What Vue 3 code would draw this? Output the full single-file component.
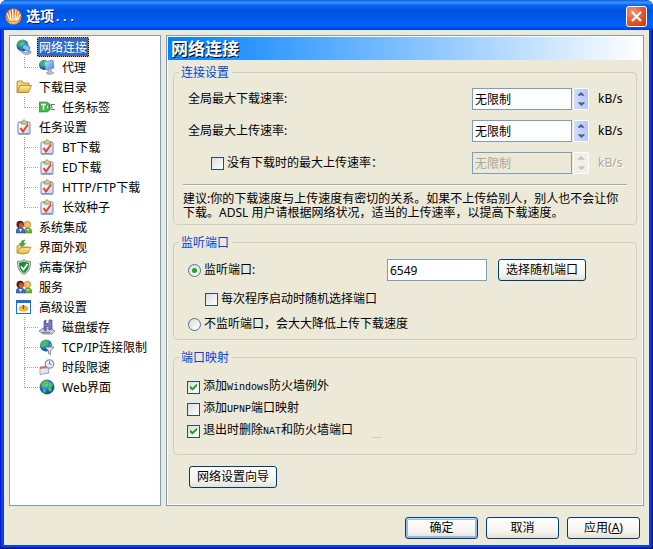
<script setup>
import { ref } from 'vue'

const tree = [
  { label: '网络连接', icon: 'network', selected: true, children: [{ label: '代理', icon: 'proxy' }] },
  { label: '下载目录', icon: 'folder', children: [{ label: '任务标签', icon: 'tag' }] },
  {
    label: '任务设置',
    icon: 'task',
    children: [
      { label: 'BT下载', icon: 'task' },
      { label: 'ED下载', icon: 'task' },
      { label: 'HTTP/FTP下载', icon: 'task' },
      { label: '长效种子', icon: 'task' },
    ],
  },
  { label: '系统集成', icon: 'users' },
  { label: '界面外观', icon: 'skin' },
  { label: '病毒保护', icon: 'shield' },
  { label: '服务', icon: 'users' },
  {
    label: '高级设置',
    icon: 'advanced',
    children: [
      { label: '磁盘缓存', icon: 'disk' },
      { label: 'TCP/IP连接限制', icon: 'filter' },
      { label: '时段限速', icon: 'schedule' },
      { label: 'Web界面', icon: 'globe' },
    ],
  },
]

const downRate = ref('无限制')
const upRate = ref('无限制')
const idleUpRate = ref('无限制')
const idleLimit = ref(false)
const listen = ref('on')
const port = ref('6549')
const randomPort = ref(false)
const firewall = ref(true)
const upnp = ref(false)
const cleanup = ref(true)
</script>

<template>
  <div class="window">
    <svg class="defs" aria-hidden="true">
      <defs>
        <radialGradient id="sea" cx="40%" cy="30%" r="75%">
          <stop offset="0" stop-color="#7fd0ff" />
          <stop offset=".5" stop-color="#1f7fd0" />
          <stop offset="1" stop-color="#0a3c8c" />
        </radialGradient>
        <linearGradient id="gold" x1="0" y1="0" x2="0" y2="1">
          <stop offset="0" stop-color="#fff0a8" />
          <stop offset="1" stop-color="#e8b040" />
        </linearGradient>
        <linearGradient id="screen" x1="0" y1="0" x2="1" y2="1">
          <stop offset="0" stop-color="#c4ecff" />
          <stop offset="1" stop-color="#3a86dc" />
        </linearGradient>
        <linearGradient id="paper" x1="0" y1="0" x2="1" y2="1">
          <stop offset="0" stop-color="#ffffff" />
          <stop offset="1" stop-color="#c8d4ee" />
        </linearGradient>
        <linearGradient id="ember" x1="0" y1="0" x2="0" y2="1">
          <stop offset="0" stop-color="#e2632c" />
          <stop offset="1" stop-color="#f29a2a" />
        </linearGradient>
        <symbol id="network" viewBox="0 0 16 16">
          <circle cx="6.5" cy="6.5" r="6" fill="url(#sea)" />
          <path d="M2 3 5 1l3 .5-1 2-2 1-1 3-2-1zM9 3l3 2v3L9 6z" fill="#3fb53a" />
          <path d="M6 9 8 5l6 3-1 5z" fill="#7cc0f4" stroke="#3f70a8" stroke-width=".7" />
          <path d="M5 9c0 4 3 5 8 4l2-1v2l-3 1.500C7 16 4 13 5 9z" fill="#b9c0cc" stroke="#6c7480" stroke-width=".5" />
        </symbol>
        <symbol id="proxy" viewBox="0 0 16 16">
          <circle cx="5" cy="6" r="5" fill="url(#sea)" />
          <path d="M1 4 4 1l3 1-2 3-2 3z" fill="#3fb53a" />
          <path d="m5 3 9-2 1 8-8 2z" fill="url(#screen)" stroke="#8490b0" stroke-width=".9" />
          <path d="m9 11 3-1 1 3 2 1-5 2-3-2 2-1z" fill="#b8bdd0" stroke="#7d84a0" stroke-width=".5" />
        </symbol>
        <symbol id="folder" viewBox="0 0 16 16">
          <path d="M1 13V3l1-1h4l1 2h6v3" fill="#f6d472" stroke="#a87820" stroke-width=".8" />
          <path d="M1 13.500 4 6.500h11.500l-3 7z" fill="url(#gold)" stroke="#a87820" stroke-width=".8" />
        </symbol>
        <symbol id="tag" viewBox="0 0 16 16">
          <path d="M0 3h8l3 2v6l-3 2H0z" fill="#44b84c" stroke="#25873a" stroke-width=".6" />
          <path d="M2 5.500h5M4.500 5.500V11" stroke="#fff" stroke-width="1.500" fill="none" />
          <circle cx="9" cy="8" r="1.200" fill="#fff" />
          <path d="m9 8 4-2.500h3M9 8l4 2.500h3M13 5l-1 3 2 1" stroke="#507850" stroke-width=".9" fill="none" />
        </symbol>
        <symbol id="task" viewBox="0 0 16 16">
          <rect x="2" y="3" width="12" height="12" rx="1" fill="url(#paper)" stroke="#7084b0" stroke-width="1" />
          <path d="M2 14h12v1.500H2z" fill="#8293bd" />
          <path d="M5 5V3l2-1 1-1.500L9.500 2l2 1v2z" fill="#d9cb90" stroke="#897640" stroke-width=".7" />
          <path d="m4.500 9 2.500 3.500 5-7" stroke="#e34828" stroke-width="2" fill="none" />
        </symbol>
        <symbol id="users" viewBox="0 0 16 16">
          <path d="M8 14c0-4 1-5 4-5s4 2 4 5z" fill="#66b432" stroke="#387918" stroke-width=".5" />
          <circle cx="11.500" cy="5.500" r="3.200" fill="#f4c46c" stroke="#a87020" stroke-width=".7" />
          <path d="M0 14c0-4 1-5 4.500-5S9 11 9 14z" fill="#3c68d8" stroke="#203c90" stroke-width=".5" />
          <circle cx="4.200" cy="5.500" r="3.700" fill="#4c2118" />
          <ellipse cx="5" cy="6.500" rx="2.200" ry="2.700" fill="#c85a30" />
          <path d="m3 10 1.500 3L6 10M11 10l1 2 1-2" fill="#fff" />
        </symbol>
        <symbol id="skin" viewBox="0 0 16 16">
          <path d="M1 14V7l3-1 2 2h6v2" fill="#f7d668" stroke="#a98427" stroke-width=".8" />
          <path d="M1 14 4 9l11-1-3 6-5 1z" fill="url(#gold)" stroke="#a98427" stroke-width=".8" />
          <path d="M9 1C6 1 5 2.500 5 4.500H3l3.500 3 3-3h-2C7.500 3 8 2 9 1z" fill="#37b52f" stroke="#1e7f22" stroke-width=".5" />
        </symbol>
        <symbol id="shield" viewBox="0 0 16 16">
          <path d="m8 .5 2 1.500 4.500.5C14.500 9 13 13 8 15.500 3 13 1.500 9 1.500 2.500L6 2z" fill="#d3dad3" stroke="#66756a" stroke-width=".8" />
          <path d="m8 2.500 5 1.500c0 5-1.500 8-5 10-3.500-2-5-5-5-10z" fill="#178f32" />
          <path d="m5 7.500 2.500 3L11.500 5" fill="none" stroke="#fff" stroke-width="1.800" />
        </symbol>
        <symbol id="advanced" viewBox="0 0 16 16">
          <rect x=".5" y="1.500" width="14" height="13" fill="#fff" stroke="#1874cd" />
          <path d="M0 1h15v3H0z" fill="#1874cd" />
          <ellipse cx="7.500" cy="9.500" rx="4.500" ry="2.700" fill="#f3b93a" stroke="#c98318" stroke-width=".5" />
          <path d="M7.500 6v4" stroke="#70441c" stroke-width="1.300" />
        </symbol>
        <symbol id="disk" viewBox="0 0 16 16">
          <path d="m0 12 4-3h8l4 3-3 3H4z" fill="#c9cbd6" stroke="#777a8c" stroke-width=".8" />
          <path d="m5 2 2-1v4l3-1V1h3v9l-3 1V7L7 8v4l-2-1z" fill="#7879cc" stroke="#45468c" stroke-width=".7" />
          <path d="M3 13.500h8" stroke="#777a8c" />
        </symbol>
        <symbol id="filter" viewBox="0 0 16 16">
          <circle cx="7" cy="6.500" r="6" fill="url(#sea)" />
          <path d="M2 4 6 1l4 1-2 3-3 1-1 3-2-2zM11 4l2 2-1 3-2-2z" fill="#4bbd3c" />
          <path d="M6 8h9l-3.500 4v3.500l-2-1V12z" fill="#dfe3e8" stroke="#626b76" stroke-width=".7" />
        </symbol>
        <symbol id="schedule" viewBox="0 0 16 16">
          <path d="m1 8 8-1 1 7-9 1.500z" fill="url(#paper)" stroke="#8a92b8" stroke-width=".8" />
          <path d="m1 8 8-1v2l-8 1z" fill="#e86a3c" />
          <circle cx="10.500" cy="5" r="4.200" fill="#e8f0fb" stroke="#8b94a8" stroke-width="1.300" />
          <path d="M10.500 2.500V5l2 .5" stroke="#3c4c74" stroke-width=".8" fill="none" />
          <path d="m6 9 2-2" stroke="#8b94a8" stroke-width="1.600" />
        </symbol>
        <symbol id="globe" viewBox="0 0 16 16">
          <circle cx="8" cy="8" r="7" fill="url(#sea)" stroke="#0c3f80" stroke-width=".7" />
          <path d="m2 5 3-3 4-.500-1 3-2 1 1 2-3 1zM9 5l3-2 2 3-2 2 1 3-2 2-2-3 1-2zM4 10l3 1-1 3-2-1z" fill="#53c541" />
        </symbol>
      </defs>
    </svg>

    <header class="titlebar">
      <svg class="logo" viewBox="0 0 18 18" aria-hidden="true">
        <circle cx="9" cy="9" r="8.500" fill="url(#ember)" />
        <path d="M2.500 6 5 12.500M5 3l1.500 10M8 1.500l.5 11.500M11.500 2l-1 11M14 4l-2 9M16 7l-2.500 5.500" stroke="#fff6e4" stroke-width="1.400" stroke-linecap="round" />
        <path d="M4 14.500c2.500 2.500 7.500 2.500 10 0-3 .8-7 .8-10 0z" fill="#ffd98a" />
      </svg>
      <h1>选项<span class="dots">...</span></h1>
      <button class="close" type="button" aria-label="关闭">
        <svg viewBox="0 0 19 19" aria-hidden="true">
          <path d="m5 5 9 9M14 5l-9 9" stroke="#fff" stroke-width="2.200" />
        </svg>
      </button>
    </header>

    <div class="client">
      <div class="columns">
        <nav class="tree">
          <ul>
            <li v-for="node in tree" :key="node.label">
              <div class="node">
                <svg class="icon"><use :href="'#' + node.icon" /></svg>
                <a href="#" :class="{ selected: node.selected }">{{ node.label }}</a>
              </div>
              <ul v-if="node.children">
                <li v-for="child in node.children" :key="child.label" class="node child">
                  <span class="branch"></span>
                  <svg class="icon"><use :href="'#' + child.icon" /></svg>
                  <a href="#">{{ child.label }}</a>
                </li>
              </ul>
            </li>
          </ul>
        </nav>

        <main class="page">
          <h2>网络连接</h2>

          <fieldset class="rates">
            <legend>连接设置</legend>
            <div class="row">
              <label class="name" for="down">全局最大下载速率:</label>
              <input id="down" v-model="downRate" class="text" type="text" />
              <span class="spin">
                <button type="button" aria-label="增加"></button>
                <button type="button" class="less" aria-label="减少"></button>
              </span>
              <span class="unit">kB/s</span>
            </div>
            <div class="row">
              <label class="name" for="up">全局最大上传速率:</label>
              <input id="up" v-model="upRate" class="text" type="text" />
              <span class="spin">
                <button type="button" aria-label="增加"></button>
                <button type="button" class="less" aria-label="减少"></button>
              </span>
              <span class="unit">kB/s</span>
            </div>
            <div class="row">
              <label class="name option nested">
                <input v-model="idleLimit" type="checkbox" />没有下载时的最大上传速率：
              </label>
              <input v-model="idleUpRate" class="text" type="text" aria-label="没有下载时的最大上传速率" :disabled="!idleLimit" />
              <span class="spin">
                <button type="button" aria-label="增加" :disabled="!idleLimit"></button>
                <button type="button" class="less" aria-label="减少" :disabled="!idleLimit"></button>
              </span>
              <span class="unit" :class="{ off: !idleLimit }">kB/s</span>
            </div>
            <hr />
            <p>建议:你的下载速度与上传速度有密切的关系。如果不上传给别人，别人也不会让你下载。ADSL 用户请根据网络状况，适当的上传速率，以提高下载速度。</p>
          </fieldset>

          <fieldset class="ports">
            <legend>监听端口</legend>
            <div class="row">
              <label class="name option">
                <input v-model="listen" type="radio" name="listen" value="on" />监听端口:
              </label>
              <input v-model="port" class="text" type="text" aria-label="监听端口" />
              <button class="button wide" type="button">选择随机端口</button>
            </div>
            <label class="option nested"><input v-model="randomPort" type="checkbox" />每次程序启动时随机选择端口</label>
            <label class="option"><input v-model="listen" type="radio" name="listen" value="off" />不监听端口，会大大降低上传下载速度</label>
          </fieldset>

          <fieldset class="mapping">
            <legend>端口映射</legend>
            <label class="option"><input v-model="firewall" type="checkbox" /><span>添加<span class="mono">Windows</span>防火墙例外</span></label>
            <label class="option"><input v-model="upnp" type="checkbox" /><span>添加<span class="mono">UPNP</span>端口映射</span></label>
            <div class="line">
              <label class="option"><input v-model="cleanup" type="checkbox" /><span>退出时删除<span class="mono">NAT</span>和防火墙端口</span></label>
              <span class="dash"></span>
            </div>
          </fieldset>

          <button class="button wide wizard" type="button">网络设置向导</button>
        </main>
      </div>

      <footer>
        <button class="button default" type="button">确定</button>
        <button class="button" type="button">取消</button>
        <button class="button" type="button">应用(<u>A</u>)</button>
      </footer>
    </div>
  </div>
</template>

<style>
body {
  margin: 0;
  background: #fff;
}
</style>

<style scoped>
* {
  box-sizing: border-box;
}

.window,
.window button,
.window input {
  font-family: "Noto Sans", "Noto Sans CJK SC", sans-serif;
  font-size: 12px;
  line-height: 14px;
  color: #000;
}

.window {
  display: flex;
  flex-direction: column;
  min-height: 100vh;
  padding: 0 4px 4px;
  border-radius: 7px 7px 0 0;
  background: #0046e6;
  box-shadow: inset -1px -1px #00138c, inset 1px 0 #0019cf, inset -2px -2px #0028c0;
}

.defs {
  position: absolute;
  width: 0;
  height: 0;
}

.titlebar {
  display: flex;
  align-items: center;
  gap: 4px;
  height: 30px;
  margin: 0 -4px;
  padding: 2px 6px 0 5px;
  border-radius: 7px 7px 0 0;
  background: linear-gradient(#0a5ce0, #3c94ff 8%, #0665f0 18%, #0053e0 35%, #0058ec 60%, #0064fc 82%, #005af0 90%, #003ccc);
}

.logo {
  width: 17px;
  height: 17px;
}

h1 {
  flex: 1;
  margin: 0;
  padding-top: 2px;
  font-size: 14px;
  line-height: 18px;
  font-weight: 700;
  color: #fff;
  text-shadow: 1px 1px #0a1883;
}

.dots {
  font-family: "Liberation Mono", monospace;
  font-size: 12px;
}

.close {
  width: 21px;
  height: 21px;
  padding: 0;
  border: 1px solid #fff;
  border-radius: 3px;
  background: radial-gradient(circle at 30% 25%, #f0957c, #e2532c 55%, #c53510);
}

.close svg {
  display: block;
  width: 19px;
  height: 19px;
}

.client {
  flex: 1;
  display: flex;
  flex-direction: column;
  padding: 5px;
  background: #ece9d8;
}

.columns {
  flex: 1;
  display: flex;
  gap: 5px;
}

.tree {
  width: 152px;
  padding-top: 1px;
  border: 1px solid #7f9db9;
  background: #fff;
}

.tree ul {
  margin: 0;
  padding: 0;
  list-style: none;
}

.node {
  display: flex;
  align-items: center;
  height: 20px;
  padding-left: 6px;
}

.node.child {
  padding-left: 14px;
}

.icon {
  flex: none;
  width: 16px;
  height: 16px;
}

.node a {
  height: 20px;
  margin-left: 5px;
  padding: 3px 1px 1px;
  border: 1px solid transparent;
  color: #000;
  text-decoration: none;
  white-space: nowrap;
}

.node a.selected {
  border: 1px dotted #f0a040;
  background: linear-gradient(#316ac6, #316ac6) padding-box, linear-gradient(#000, #000) border-box;
  color: #fff;
}

.branch {
  flex: none;
  width: 15px;
  height: 20px;
}

.branch::before,
.branch::after {
  content: "";
  display: block;
  height: 10px;
  border-left: 1px dotted #aca899;
}

.branch::before {
  width: 13px;
  border-bottom: 1px dotted #aca899;
}

.child:last-child .branch::after {
  border-left: 0;
}

.page {
  flex: 1;
  min-width: 0;
  border: 1px solid #7f9db9;
  box-shadow: inset 0 0 0 1px #fff;
  padding: 1px;
}

h2 {
  height: 23px;
  margin: 0;
  padding-left: 3px;
  font-size: 17px;
  line-height: 23px;
  font-weight: 700;
  color: #fff;
  text-shadow: 1px 1px #000;
  background: linear-gradient(90deg, #0080ff, #fff);
}

fieldset {
  min-width: 0;
  margin: 10px 5px 0;
  padding: 8px 9px 4px;
  border: 1px solid #d0d0bf;
  border-radius: 4px;
}

h2 + fieldset {
  margin-top: 5px;
}

legend {
  margin-left: -4px;
  padding: 0 3px 0 2px;
  line-height: 15px;
  color: #0046d5;
}

.row {
  display: flex;
  align-items: center;
  padding-left: 5px;
}

.name {
  flex: 1;
}

.text {
  width: 100px;
  height: 22px;
  padding: 0 2px;
  border: 1px solid #7f9db9;
  background: #fff;
}

.window .text:disabled {
  background: #ece9d8;
  color: #aca899;
}

.spin {
  display: flex;
  flex-direction: column;
  width: 16px;
  height: 22px;
  margin: 0 9px 0 1px;
  border: 1px solid #fff;
  border-radius: 2px;
}

.spin button {
  flex: 1;
  display: grid;
  place-items: center;
  padding: 0;
  border: 0;
  background: linear-gradient(90deg, #cfdcfd, #b4c8f6);
}

.spin button::before {
  content: "";
  width: 7px;
  height: 4px;
  background: #4d6185;
  clip-path: polygon(50% 0, 100% 80%, 80% 100%, 50% 80%, 20% 100%, 0 80%);
}

.spin .less::before {
  transform: rotate(180deg);
}

.spin button:disabled {
  background: #f2f0e6;
}

.spin button:disabled::before {
  background: #c5c3b5;
}

.unit {
  width: 29px;
}

.unit.off {
  color: #aca899;
  text-shadow: 1px 1px #fff;
}

.rates .row {
  margin-bottom: 10px;
}

hr {
  height: 2px;
  margin: 0 0 6px;
  border: 0;
  border-top: 1px solid #aca899;
  background: #fff;
}

p {
  margin: 0;
}

.option {
  display: flex;
  align-items: center;
  gap: 3px;
  height: 14px;
}

.option input {
  flex: none;
  display: grid;
  place-items: center;
  width: 13px;
  height: 13px;
  margin: 0;
  appearance: none;
  border: 1px solid #1c5180;
  background: linear-gradient(135deg, #dcdcd7, #fff);
}

.option input[type="radio"] {
  border-color: #4a7296;
  border-radius: 50%;
}

.option input:checked::before {
  content: "";
  width: 7px;
  height: 7px;
  background: #21a121;
  clip-path: polygon(0 30%, 36% 60%, 100% 0, 100% 40%, 36% 100%, 0 70%);
}

.option input[type="radio"]:checked::before {
  width: 5px;
  height: 5px;
  border-radius: 50%;
  clip-path: none;
}

.rates .nested {
  padding-left: 23px;
}

.ports {
  display: grid;
  gap: 11px;
  padding-top: 9px;
  padding-bottom: 8px;
}

.ports > .option {
  padding-left: 5px;
}

.ports > .nested {
  padding-left: 22px;
}

.ports .row {
  padding-right: 41px;
}

.ports .text {
  margin-right: 11px;
}

.mapping {
  padding-top: 15px;
  padding-bottom: 16px;
}

.mapping .option {
  padding-left: 4px;
}

.mapping .option + .option,
.mapping .line {
  margin-top: 8px;
}

.line {
  display: flex;
  align-items: flex-end;
  gap: 19px;
}

.mono {
  font-family: "Liberation Mono", monospace;
  font-size: 10px;
}

.dash {
  width: 10px;
  height: 1px;
  background: #d0d0bf;
}

.button {
  width: 73px;
  height: 22px;
  padding: 0;
  border: 1px solid #003c74;
  border-radius: 3px;
  background: linear-gradient(#fff, #f4f3ee 70%, #e3dfd3);
}

.button.wide {
  width: 88px;
}

.button.default {
  box-shadow: inset 0 1px #cee7ff, inset 0 0 0 2px #98b8ea;
}

.wizard {
  display: block;
  margin: 11px 21px;
}

footer {
  display: flex;
  justify-content: flex-end;
  gap: 8px;
  padding: 11px 4px 1px;
}
</style>
